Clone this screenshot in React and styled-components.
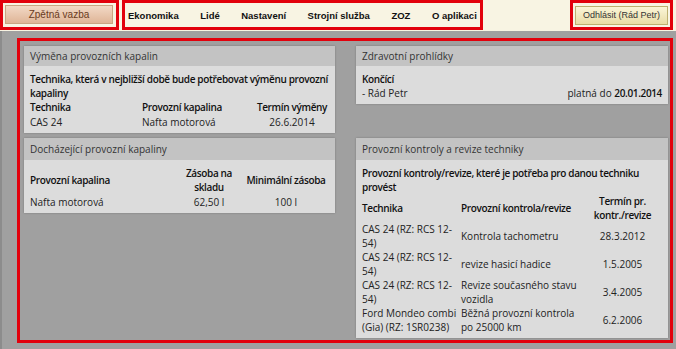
import styled, { createGlobalStyle } from "styled-components";

const GlobalStyle = createGlobalStyle`
  html, body {
    margin: 0;
    padding: 0;
    height: 100%;
    background: #a0a0a0;
  }
  body {
    font-family: "Open Sans", "Noto Sans", sans-serif;
  }
`;

const navItems = ["Ekonomika", "Lidé", "Nastavení", "Strojní služba", "ZOZ", "O aplikaci"];

const kontroly = [
  { technika: "CAS 24 (RZ: RCS 12-54)", kontrola: "Kontrola tachometru", termin: "28.3.2012" },
  { technika: "CAS 24 (RZ: RCS 12-54)", kontrola: "revize hasicí hadice", termin: "1.5.2005" },
  { technika: "CAS 24 (RZ: RCS 12-54)", kontrola: "Revize současného stavu vozidla", termin: "3.4.2005" },
  { technika: "Ford Mondeo combi (Gia) (RZ: 1SR0238)", kontrola: "Běžná provozní kontrola po 25000 km", termin: "6.2.2006" },
];

const TopBar = styled.div`
  display: flex;
  height: 31px;
  background: #f8f4e3;
`;

const Frame = styled.div`
  box-sizing: border-box;
  height: 30px;
  border: 3px solid #e2000c;
  display: flex;
  align-items: center;
`;

const FeedbackFrame = styled(Frame)`
  width: 119px;
  padding-left: 2px;
`;

const FeedbackButton = styled.button`
  box-sizing: border-box;
  width: 108px;
  height: 19px;
  margin-top: -1px;
  padding: 0;
  border: 1px solid #c9a583;
  background: linear-gradient(#f2d9c6, #dfb597);
  font: 10px "Liberation Sans", Arial, sans-serif;
  color: #6a3b22;
`;

const NavFrame = styled(Frame)`
  width: 361px;
  margin-left: 3px;
  padding-left: 3px;
  gap: 21.5px;
`;

const NavLink = styled.a`
  font: bold 9.5px "Liberation Sans", Arial, sans-serif;
  color: #111;
  text-decoration: none;
  white-space: nowrap;
  flex-shrink: 0;
`;

const LogoutFrame = styled(Frame)`
  width: 103px;
  margin-left: auto;
  margin-right: 3px;
  padding-left: 2px;
`;

const LogoutButton = styled.button`
  box-sizing: border-box;
  width: 93px;
  height: 19px;
  padding: 0;
  border: 1px solid #bdb070;
  background: linear-gradient(#fbf6d8, #e9dca6);
  font: 9px "Liberation Sans", Arial, sans-serif;
  color: #333;
  white-space: nowrap;
`;

const Workspace = styled.div`
  border-left: 2px solid #8c8c8c;
  padding: 7px 3px 0 15px;
  height: 318px;
  box-sizing: border-box;
`;

const MainFrame = styled.div`
  box-sizing: border-box;
  height: 305px;
  border: 3px solid #e2000c;
  padding: 5px 2px 2px 4px;
  display: grid;
  grid-template-columns: 311px 312px;
  grid-template-rows: auto 1fr;
  column-gap: 21px;
  row-gap: 5px;
  align-items: start;
`;

const Panel = styled.section`
  background: #dcdcdc;
  box-shadow: 0 0 2px rgba(0, 0, 0, 0.25);
`;

const PanelHead = styled.div`
  height: ${(p) => p.$h || 20}px;
  line-height: ${(p) => p.$h || 20}px;
  padding: 0 6px;
  background: #c3c3c3;
  font-size: 10px;
  color: #333;
`;

const PanelBody = styled.div`
  padding: 6px 6px 4px;
  font-size: 10px;
  line-height: 14px;
  color: #222;
`;

const Title = styled.div`
  font-weight: 600;
  letter-spacing: -0.35px;
  color: #111;
`;

const Table = styled.table`
  width: 100%;
  border-collapse: collapse;
  font-size: 10px;
  line-height: 14px;
  color: #222;
  th, td {
    padding: 0;
    vertical-align: middle;
  }
  th {
    font-weight: 600;
    letter-spacing: -0.35px;
    color: #111;
  }
`;

const Cell = styled.td`
  text-align: ${(p) => p.$align || "left"};
  padding-top: ${(p) => p.$pt || 0}px !important;
`;

const Head = styled.th`
  text-align: ${(p) => p.$align || "left"};
  width: ${(p) => (p.$w ? `${p.$w}px` : "auto")};
`;

const SplitRow = styled.div`
  display: flex;
  justify-content: space-between;
  b {
    font-weight: 600;
    letter-spacing: -0.35px;
    color: #111;
  }
`;

export default function App() {
  return (
    <>
      <GlobalStyle />
      <TopBar>
        <FeedbackFrame>
          <FeedbackButton>Zpětná vazba</FeedbackButton>
        </FeedbackFrame>
        <NavFrame>
          {navItems.map((item) => (
            <NavLink key={item} href="#">{item}</NavLink>
          ))}
        </NavFrame>
        <LogoutFrame>
          <LogoutButton>Odhlásit (Rád Petr)</LogoutButton>
        </LogoutFrame>
      </TopBar>
      <Workspace>
        <MainFrame>
          <Panel>
            <PanelHead>Výměna provozních kapalin</PanelHead>
            <PanelBody>
              <Title>Technika, která v nejbližší době bude potřebovat výměnu provozní kapaliny</Title>
              <Table>
                <thead>
                  <tr>
                    <Head $w={112}>Technika</Head>
                    <Head $w={113}>Provozní kapalina</Head>
                    <Head $align="center">Termín výměny</Head>
                  </tr>
                </thead>
                <tbody>
                  <tr>
                    <Cell $pt={1}>CAS 24</Cell>
                    <Cell $pt={1}>Nafta motorová</Cell>
                    <Cell $pt={1} $align="center">26.6.2014</Cell>
                  </tr>
                </tbody>
              </Table>
            </PanelBody>
          </Panel>

          <Panel>
            <PanelHead>Zdravotní prohlídky</PanelHead>
            <PanelBody>
              <Title>Končící</Title>
              <SplitRow>
                <span>- Rád Petr</span>
                <span>platná do <b>20.01.2014</b></span>
              </SplitRow>
            </PanelBody>
          </Panel>

          <Panel>
            <PanelHead $h={22}>Docházející provozní kapaliny</PanelHead>
            <PanelBody>
              <Table>
                <thead>
                  <tr>
                    <Head $w={145}>Provozní kapalina</Head>
                    <Head $w={68} $align="center">Zásoba na skladu</Head>
                    <Head $align="center">Minimální zásoba</Head>
                  </tr>
                </thead>
                <tbody>
                  <tr>
                    <Cell $pt={1}>Nafta motorová</Cell>
                    <Cell $pt={1} $align="center">62,50 l</Cell>
                    <Cell $pt={1} $align="center">100 l</Cell>
                  </tr>
                </tbody>
              </Table>
            </PanelBody>
          </Panel>

          <Panel>
            <PanelHead $h={22}>Provozní kontroly a revize techniky</PanelHead>
            <PanelBody>
              <Title>Provozní kontroly/revize, které je potřeba pro danou techniku provést</Title>
              <Table>
                <thead>
                  <tr>
                    <Head $w={99}>Technika</Head>
                    <Head $w={122}>Provozní kontrola/revize</Head>
                    <Head $align="center">Termín pr. kontr./revize</Head>
                  </tr>
                </thead>
                <tbody>
                  {kontroly.map((k, i) => (
                    <tr key={i}>
                      <Cell>{k.technika}</Cell>
                      <Cell>{k.kontrola}</Cell>
                      <Cell $align="center">{k.termin}</Cell>
                    </tr>
                  ))}
                </tbody>
              </Table>
            </PanelBody>
          </Panel>
        </MainFrame>
      </Workspace>
    </>
  );
}
